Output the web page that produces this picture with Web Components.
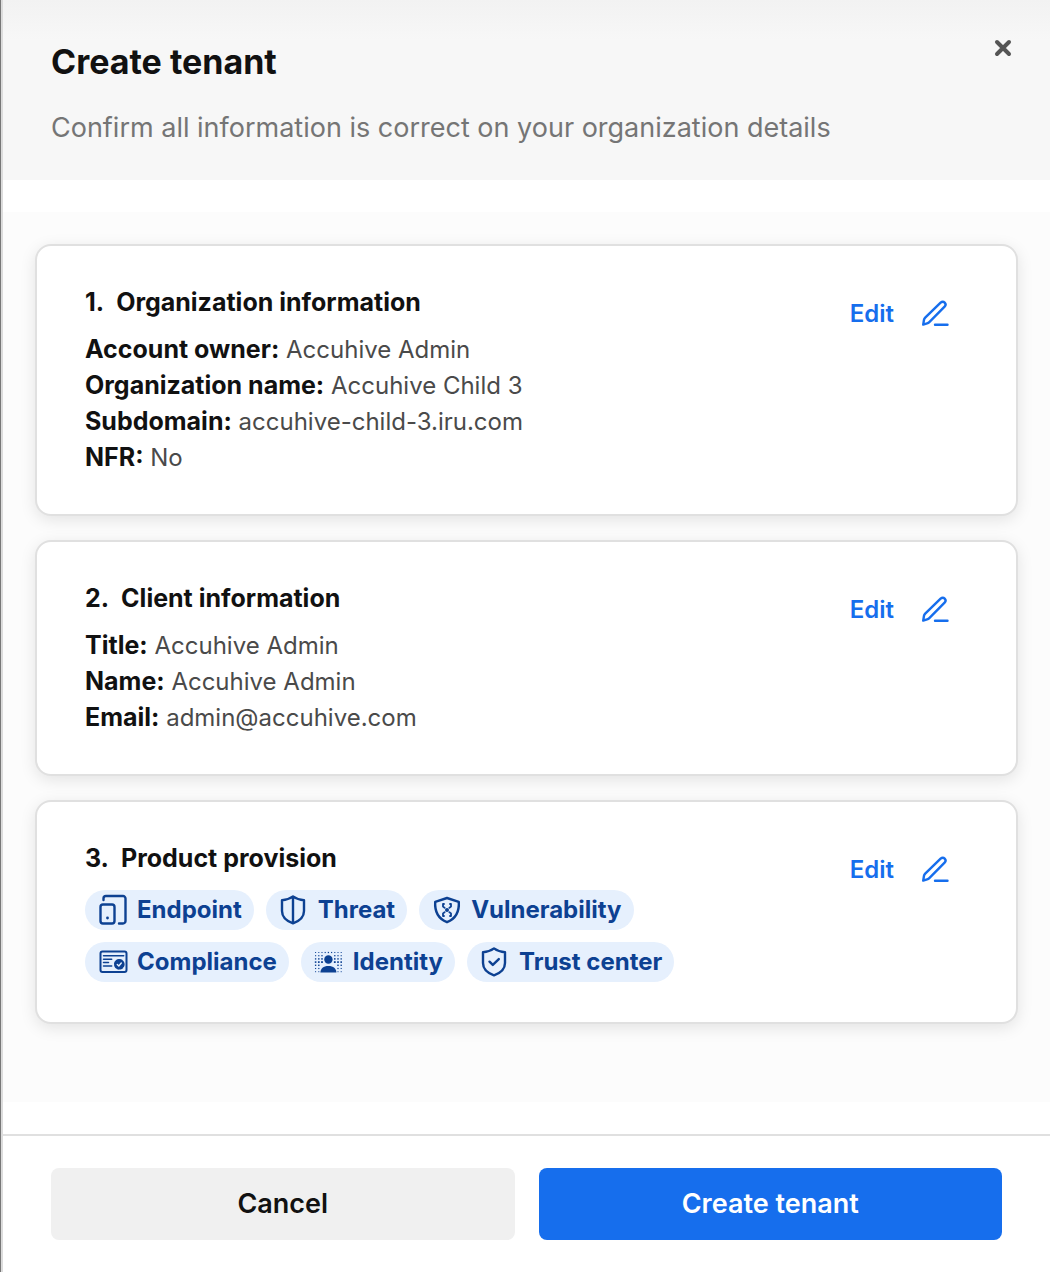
<!DOCTYPE html>
<html lang="en">
<head>
<meta charset="utf-8">
<meta name="viewport" content="width=device-width, initial-scale=1">
<title>Create tenant</title>
<style>
  :root {
    --ink: #111;
    --muted: #757575;
    --text: #4a4a4a;
    --blue: #166eed;
    --navy: #0d4192;
    --chip: #e6f0fd;
    --line: #e0e0e0;
  }
  body {
    margin: 0;
    background: #fff;
    color: var(--ink);
    font-family: Inter, "Liberation Sans", sans-serif;
    font-size: 24px;
    line-height: 36px;
  }
</style>
</head>
<body>
<tenant-drawer>
  <drawer-header slot="header" heading="Create tenant">Confirm all information is correct on your organization details</drawer-header>

  <summary-card number="1" heading="Organization information">
    <detail-row label="Account owner">Accuhive Admin</detail-row>
    <detail-row label="Organization name">Accuhive Child 3</detail-row>
    <detail-row label="Subdomain">accuhive-child-3.iru.com</detail-row>
    <detail-row label="NFR">No</detail-row>
  </summary-card>

  <summary-card number="2" heading="Client information">
    <detail-row label="Title">Accuhive Admin</detail-row>
    <detail-row label="Name">Accuhive Admin</detail-row>
    <detail-row label="Email">admin@accuhive.com</detail-row>
  </summary-card>

  <summary-card number="3" heading="Product provision">
    <chip-list>
      <product-chip icon="endpoint">Endpoint</product-chip>
      <product-chip icon="threat">Threat</product-chip>
      <product-chip icon="vulnerability">Vulnerability</product-chip>
      <product-chip icon="compliance">Compliance</product-chip>
      <product-chip icon="identity">Identity</product-chip>
      <product-chip icon="trust">Trust center</product-chip>
    </chip-list>
  </summary-card>

  <action-button slot="footer">Cancel</action-button>
  <action-button slot="footer" variant="primary">Create tenant</action-button>
</tenant-drawer>

<script>
// halftone dots behind the identity portrait
function identityDots() {
  let dots = '';
  for (let row = 0; row < 7; row++) {
    for (let col = 0; col < 9; col++) {
      const x = 2.6 + col * 3.2;
      const y = 6.5 + row * 3.2;
      const inHead = Math.hypot(x - 15.4, y - 13.5) < 5.5;
      const inBody = y > 18.5 && Math.abs(x - 15.4) < 8;
      if (inHead || inBody) continue;
      const size = Math.max(1, 2 - Math.abs(col - 4) * 0.1 - Math.abs(row - 3) * 0.25);
      dots += `<rect x="${x - size / 2}" y="${y - size / 2}" width="${size}" height="${size}"/>`;
    }
  }
  return dots;
}

const ICONS = {
  endpoint: `
    <rect x="3.5" y="10.5" width="14" height="19" rx="2.5"/>
    <path d="M6.5 6V4.5A2.5 2.5 0 0 1 9 2h17a2.5 2.5 0 0 1 2.5 2.5V27a2.5 2.5 0 0 1-2.5 2.5h-4"/>
    <circle cx="10.5" cy="24" r="1.4" fill="currentColor" stroke="none"/>`,
  threat: `
    <path d="M15 2.4C12 4.6 8 6 4 6.2V17c0 6 4.4 10 11 12.3C21.6 27 26 23 26 17V6.2C22 6 18 4.6 15 2.4ZM15 2.4V29"/>`,
  vulnerability: `
    <path d="M16 4 4.2 7.8C3.6 17.5 6.5 24.5 16 28.2 25.5 24.5 28.4 17.5 27.8 7.8Z"/>
    <path d="M13 10h-1v2.6l1.6 1.2M19 10h1v2.6l-1.600 1.200M13 22h-1v-2.600l1.600-1.200M19 22h1v-2.600l-1.600-1.200" stroke-width="1.8"/>
    <circle cx="16" cy="16" r="2" fill="currentColor" stroke="none"/>`,
  compliance: `
    <rect x="3.5" y="5.5" width="26" height="20.5" rx="2" stroke-width="2"/>
    <path d="M6.5 9.8h20.200M6.5 13.3h8.2M6.5 16.6h5M6.5 20h8.2" stroke-width="1.5"/>
    <circle cx="22.3" cy="18.3" r="4.5" fill="currentColor" stroke-width="1.7" stroke-dasharray="2.2 1.3"/>
    <path d="m20.3 18.6 1.5 1.4 2.5-3" stroke="var(--chip)" stroke-width="1.4"/>`,
  identity: `
    <g fill="currentColor" stroke="none">
      ${identityDots()}
      <circle cx="15.4" cy="13.5" r="4.2"/>
      <path d="M7.4 26.5c0-4 3-6.6 8-6.6s8 2.6 8 6.600Z"/>
    </g>`,
  trust: `
    <path d="M15 2.4C12 4.6 8 6 4 6.2V17c0 6 4.4 10 11 12.3C21.6 27 26 23 26 17V6.2C22 6 18 4.6 15 2.4Z"/>
    <path d="m10.5 15.7 3.3 3.2 6-5.8"/>`,
  edit: `
    <path d="M3.2 26.6 4 21.8c.2-.9.5-1.5 1.2-2.2L20.6 4.7c1.3-1.2 3-1.2 4.1-.1s1.1 2.8-.1 4.1L9.3 24.2c-.7.7-1.3 1-2.2 1.2ZM15 26.8h12.5"/>`,
  close: `<path d="m10 10 12 12M22 10 10 22" stroke-width="4"/>`
};

function icon(name) {
  return `<svg width="32" height="32" viewBox="0 0 32 32" fill="none" stroke="currentColor"
    stroke-width="2.4" stroke-linecap="round" stroke-linejoin="round" aria-hidden="true">${ICONS[name]}</svg>`;
}

class TenantDrawer extends HTMLElement {
  connectedCallback() {
    this.attachShadow({ mode: 'open' });
    this.shadowRoot.innerHTML = `
      <style>
        :host {
          display: flex;
          flex-direction: column;
          box-sizing: border-box;
          min-height: 100vh;
          border-left: 1px solid #777;
          box-shadow: inset 2px 0 #dcdcdc;
          padding-left: 2px;
        }
        main {
          flex: 1;
          display: flex;
          flex-direction: column;
          gap: 24px;
          margin: 32px 0;
          padding: 32px;
          background: #fcfcfc;
        }
        footer {
          display: flex;
          gap: 24px;
          padding: 32px 48px;
          border-top: 2px solid var(--line);
        }
      </style>
      <slot name="header"></slot>
      <main><slot></slot></main>
      <footer><slot name="footer"></slot></footer>
    `;
  }
}

class DrawerHeader extends HTMLElement {
  connectedCallback() {
    this.attachShadow({ mode: 'open' });
    this.shadowRoot.innerHTML = `
      <style>
        :host { display: block; }
        header {
          display: flex;
          align-items: flex-start;
          justify-content: space-between;
          padding: 32px 31px 34px 48px;
          background: linear-gradient(#f2f2f2, #f7f7f7 40px);
        }
        .titles { padding-top: 6px; }
        h1 {
          margin: 0 0 24px;
          font-size: 34px;
          font-weight: 700;
          line-height: 48px;
        }
        p {
          margin: 0;
          color: var(--muted);
          font-size: 27px;
        }
        button {
          display: flex;
          padding: 0;
          border: 0;
          background: none;
          color: #555;
          cursor: pointer;
        }
      </style>
      <header>
        <div class="titles">
          <h1>${this.getAttribute('heading')}</h1>
          <p><slot></slot></p>
        </div>
        <button type="button" aria-label="Close">${icon('close')}</button>
      </header>
    `;
  }
}

class SummaryCard extends HTMLElement {
  connectedCallback() {
    this.attachShadow({ mode: 'open' });
    this.shadowRoot.innerHTML = `
      <style>
        :host { display: block; }
        section {
          display: flex;
          align-items: flex-start;
          padding: 38px 48px;
          border: 2px solid var(--line);
          border-radius: 16px;
          background: #fff;
          box-shadow: 0 4px 16px rgba(0, 0, 0, 0.1);
        }
        .content { flex: 1; }
        h2 {
          display: flex;
          gap: 12px;
          margin: 0 0 12px;
          font-size: 25px;
          font-weight: 700;
        }
        button {
          display: flex;
          align-items: center;
          gap: 26px;
          padding: 12px 16px;
          border: 0;
          background: none;
          color: var(--blue);
          font: inherit;
          font-weight: 600;
          cursor: pointer;
        }
      </style>
      <section>
        <div class="content">
          <h2><span>${this.getAttribute('number')}.</span><span>${this.getAttribute('heading')}</span></h2>
          <slot></slot>
        </div>
        <button type="button">Edit ${icon('edit')}</button>
      </section>
    `;
  }
}

class DetailRow extends HTMLElement {
  connectedCallback() {
    this.attachShadow({ mode: 'open' });
    this.shadowRoot.innerHTML = `
      <style>
        :host { display: block; color: var(--text); }
        b {
          color: var(--ink);
          font-size: 25px;
          font-weight: 700;
          line-height: 1;
        }
      </style>
      <b>${this.getAttribute('label')}:</b> <slot></slot>
    `;
  }
}

class ChipList extends HTMLElement {
  connectedCallback() {
    this.attachShadow({ mode: 'open' });
    this.shadowRoot.innerHTML = `
      <style>
        :host {
          display: flex;
          flex-wrap: wrap;
          gap: 12px;
          padding: 2px 0;
        }
      </style>
      <slot></slot>
    `;
  }
}

class ProductChip extends HTMLElement {
  connectedCallback() {
    this.attachShadow({ mode: 'open' });
    this.shadowRoot.innerHTML = `
      <style>
        :host {
          display: flex;
          align-items: center;
          gap: 8px;
          height: 40px;
          padding: 0 12px;
          border-radius: 20px;
          background: var(--chip);
          color: var(--navy);
          font-weight: 700;
        }
      </style>
      ${icon(this.getAttribute('icon'))}<span><slot></slot></span>
    `;
  }
}

class ActionButton extends HTMLElement {
  connectedCallback() {
    this.attachShadow({ mode: 'open' });
    this.shadowRoot.innerHTML = `
      <style>
        :host { flex: 1; }
        button {
          width: 100%;
          height: 72px;
          border: 0;
          border-radius: 8px;
          background: #f0f0f0;
          color: var(--ink);
          font: inherit;
          font-size: 27px;
          font-weight: 600;
          cursor: pointer;
        }
        :host([variant="primary"]) button {
          background: var(--blue);
          color: #fff;
        }
      </style>
      <button type="button"><slot></slot></button>
    `;
  }
}

customElements.define('tenant-drawer', TenantDrawer);
customElements.define('drawer-header', DrawerHeader);
customElements.define('summary-card', SummaryCard);
customElements.define('detail-row', DetailRow);
customElements.define('chip-list', ChipList);
customElements.define('product-chip', ProductChip);
customElements.define('action-button', ActionButton);
</script>
</body>
</html>
